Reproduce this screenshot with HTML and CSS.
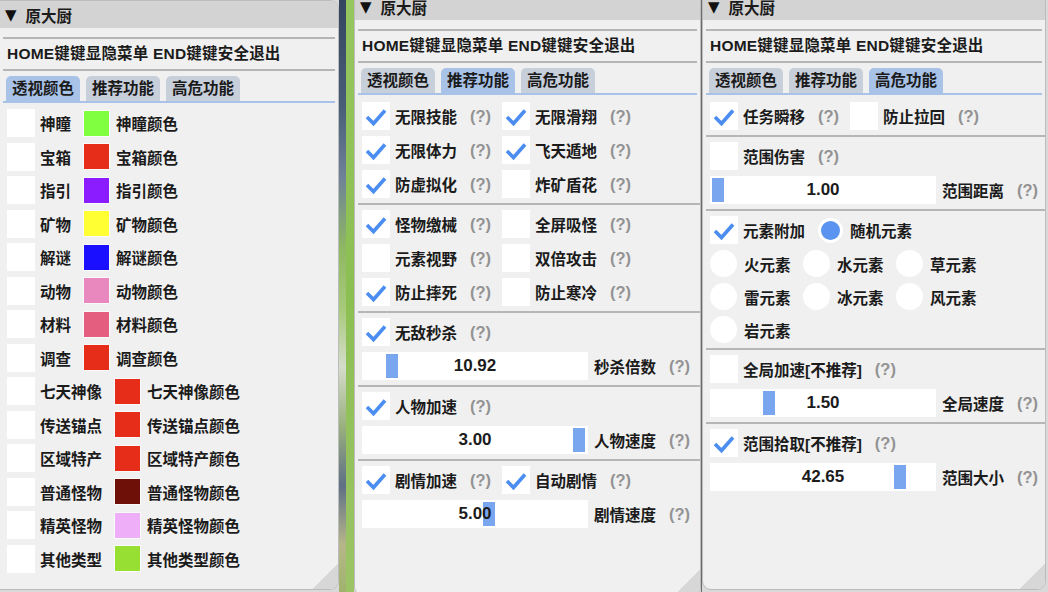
FILE: index.html
```html
<!DOCTYPE html>
<html lang="zh-CN">
<head>
    <meta charset="UTF-8">
    <title>原大厨</title>
    <link rel="stylesheet" href="styles.css">
</head>
<body>
    <!-- 透视颜色 -->
    <div class="win win-a">
        <div class="win-title"><span class="arrow">▼</span>原大厨</div>
        <div class="win-body">
            <div class="sep"></div>
            <div class="hint">HOME键键显隐菜单 END键键安全退出</div>
            <div class="sep"></div>
            <div class="tabs">
                <span class="tab active">透视颜色</span>
                <span class="tab">推荐功能</span>
                <span class="tab">高危功能</span>
            </div>
            <div class="list list-esp">
                <div class="row"><span class="box"></span><span class="lbl">神瞳</span><span class="swatch" style="background:#80ff40"></span><span class="lbl">神瞳颜色</span></div>
                <div class="row"><span class="box"></span><span class="lbl">宝箱</span><span class="swatch" style="background:#e52d1a"></span><span class="lbl">宝箱颜色</span></div>
                <div class="row"><span class="box"></span><span class="lbl">指引</span><span class="swatch" style="background:#8a1cff"></span><span class="lbl">指引颜色</span></div>
                <div class="row"><span class="box"></span><span class="lbl">矿物</span><span class="swatch" style="background:#ffff33"></span><span class="lbl">矿物颜色</span></div>
                <div class="row"><span class="box"></span><span class="lbl">解谜</span><span class="swatch" style="background:#1a0fff"></span><span class="lbl">解谜颜色</span></div>
                <div class="row"><span class="box"></span><span class="lbl">动物</span><span class="swatch" style="background:#e888bf"></span><span class="lbl">动物颜色</span></div>
                <div class="row"><span class="box"></span><span class="lbl">材料</span><span class="swatch" style="background:#e45e80"></span><span class="lbl">材料颜色</span></div>
                <div class="row"><span class="box"></span><span class="lbl">调查</span><span class="swatch" style="background:#e52d1a"></span><span class="lbl">调查颜色</span></div>
                <div class="row"><span class="box"></span><span class="lbl">七天神像</span><span class="swatch" style="background:#e52d1a"></span><span class="lbl">七天神像颜色</span></div>
                <div class="row"><span class="box"></span><span class="lbl">传送锚点</span><span class="swatch" style="background:#e52d1a"></span><span class="lbl">传送锚点颜色</span></div>
                <div class="row"><span class="box"></span><span class="lbl">区域特产</span><span class="swatch" style="background:#e52d1a"></span><span class="lbl">区域特产颜色</span></div>
                <div class="row"><span class="box"></span><span class="lbl">普通怪物</span><span class="swatch" style="background:#6e1008"></span><span class="lbl">普通怪物颜色</span></div>
                <div class="row"><span class="box"></span><span class="lbl">精英怪物</span><span class="swatch" style="background:#efaef8"></span><span class="lbl">精英怪物颜色</span></div>
                <div class="row"><span class="box"></span><span class="lbl">其他类型</span><span class="swatch" style="background:#97df33"></span><span class="lbl">其他类型颜色</span></div>
            </div>
        </div>
        <div class="grip"></div>
    </div>

    <div class="scenery"><div class="rock"></div><div class="grass"></div></div>

    <!-- 推荐功能 -->
    <div class="win win-b">
        <div class="win-title"><span class="arrow">▼</span>原大厨</div>
        <div class="win-body">
            <div class="sep"></div>
            <div class="hint">HOME键键显隐菜单 END键键安全退出</div>
            <div class="sep"></div>
            <div class="tabs">
                <span class="tab">透视颜色</span>
                <span class="tab active">推荐功能</span>
                <span class="tab">高危功能</span>
            </div>
            <div class="list">
                <div class="row">
                    <div class="opt"><span class="box"><svg viewBox="0 0 28 28"><path d="M5 15l6.5 6.5L23 8.5"/></svg></span><span class="lbl">无限技能</span><span class="help">(?)</span></div>
                    <div class="opt"><span class="box"><svg viewBox="0 0 28 28"><path d="M5 15l6.5 6.5L23 8.5"/></svg></span><span class="lbl">无限滑翔</span><span class="help">(?)</span></div>
                </div>
                <div class="row">
                    <div class="opt"><span class="box"><svg viewBox="0 0 28 28"><path d="M5 15l6.5 6.5L23 8.5"/></svg></span><span class="lbl">无限体力</span><span class="help">(?)</span></div>
                    <div class="opt"><span class="box"><svg viewBox="0 0 28 28"><path d="M5 15l6.5 6.5L23 8.5"/></svg></span><span class="lbl">飞天遁地</span><span class="help">(?)</span></div>
                </div>
                <div class="row">
                    <div class="opt"><span class="box"><svg viewBox="0 0 28 28"><path d="M5 15l6.5 6.5L23 8.5"/></svg></span><span class="lbl">防虚拟化</span><span class="help">(?)</span></div>
                    <div class="opt"><span class="box"></span><span class="lbl">炸矿盾花</span><span class="help">(?)</span></div>
                </div>
                <div class="sep"></div>
                <div class="row">
                    <div class="opt"><span class="box"><svg viewBox="0 0 28 28"><path d="M5 15l6.5 6.5L23 8.5"/></svg></span><span class="lbl">怪物缴械</span><span class="help">(?)</span></div>
                    <div class="opt"><span class="box"></span><span class="lbl">全屏吸怪</span><span class="help">(?)</span></div>
                </div>
                <div class="row">
                    <div class="opt"><span class="box"></span><span class="lbl">元素视野</span><span class="help">(?)</span></div>
                    <div class="opt"><span class="box"></span><span class="lbl">双倍攻击</span><span class="help">(?)</span></div>
                </div>
                <div class="row">
                    <div class="opt"><span class="box"><svg viewBox="0 0 28 28"><path d="M5 15l6.5 6.5L23 8.5"/></svg></span><span class="lbl">防止摔死</span><span class="help">(?)</span></div>
                    <div class="opt"><span class="box"></span><span class="lbl">防止寒冷</span><span class="help">(?)</span></div>
                </div>
                <div class="sep"></div>
                <div class="row">
                    <div class="opt"><span class="box"><svg viewBox="0 0 28 28"><path d="M5 15l6.5 6.5L23 8.5"/></svg></span><span class="lbl">无敌秒杀</span><span class="help">(?)</span></div>
                </div>
                <div class="row">
                    <div class="slider"><span class="grab" style="left:24px"></span><span class="val">10.92</span></div>
                    <span class="lbl">秒杀倍数</span><span class="help">(?)</span>
                </div>
                <div class="sep"></div>
                <div class="row">
                    <div class="opt"><span class="box"><svg viewBox="0 0 28 28"><path d="M5 15l6.5 6.5L23 8.5"/></svg></span><span class="lbl">人物加速</span><span class="help">(?)</span></div>
                </div>
                <div class="row">
                    <div class="slider"><span class="grab" style="left:211px"></span><span class="val">3.00</span></div>
                    <span class="lbl">人物速度</span><span class="help">(?)</span>
                </div>
                <div class="sep"></div>
                <div class="row">
                    <div class="opt"><span class="box"><svg viewBox="0 0 28 28"><path d="M5 15l6.5 6.5L23 8.5"/></svg></span><span class="lbl">剧情加速</span><span class="help">(?)</span></div>
                    <div class="opt"><span class="box"><svg viewBox="0 0 28 28"><path d="M5 15l6.5 6.5L23 8.5"/></svg></span><span class="lbl">自动剧情</span><span class="help">(?)</span></div>
                </div>
                <div class="row">
                    <div class="slider"><span class="grab" style="left:121px"></span><span class="val">5.00</span></div>
                    <span class="lbl">剧情速度</span><span class="help">(?)</span>
                </div>
            </div>
        </div>
        <div class="grip"></div>
    </div>

    <div class="seam"></div>

    <!-- 高危功能 -->
    <div class="win win-c">
        <div class="win-title"><span class="arrow">▼</span>原大厨</div>
        <div class="win-body">
            <div class="sep"></div>
            <div class="hint">HOME键键显隐菜单 END键键安全退出</div>
            <div class="sep"></div>
            <div class="tabs">
                <span class="tab">透视颜色</span>
                <span class="tab">推荐功能</span>
                <span class="tab active">高危功能</span>
            </div>
            <div class="list">
                <div class="row">
                    <div class="opt"><span class="box"><svg viewBox="0 0 28 28"><path d="M5 15l6.5 6.5L23 8.5"/></svg></span><span class="lbl">任务瞬移</span><span class="help">(?)</span></div>
                    <div class="opt"><span class="box"></span><span class="lbl">防止拉回</span><span class="help">(?)</span></div>
                </div>
                <div class="sep"></div>
                <div class="row">
                    <div class="opt"><span class="box"></span><span class="lbl">范围伤害</span><span class="help">(?)</span></div>
                </div>
                <div class="row">
                    <div class="slider"><span class="grab" style="left:2px"></span><span class="val">1.00</span></div>
                    <span class="lbl">范围距离</span><span class="help">(?)</span>
                </div>
                <div class="sep"></div>
                <div class="row">
                    <span class="box"><svg viewBox="0 0 28 28"><path d="M5 15l6.5 6.5L23 8.5"/></svg></span><span class="lbl">元素附加</span>
                    <span class="radio on"></span><span class="lbl">随机元素</span>
                </div>
                <div class="row radios">
                    <div class="pick"><span class="radio"></span><span class="lbl">火元素</span></div>
                    <div class="pick"><span class="radio"></span><span class="lbl">水元素</span></div>
                    <div class="pick"><span class="radio"></span><span class="lbl">草元素</span></div>
                </div>
                <div class="row radios">
                    <div class="pick"><span class="radio"></span><span class="lbl">雷元素</span></div>
                    <div class="pick"><span class="radio"></span><span class="lbl">冰元素</span></div>
                    <div class="pick"><span class="radio"></span><span class="lbl">风元素</span></div>
                </div>
                <div class="row radios">
                    <div class="pick"><span class="radio"></span><span class="lbl">岩元素</span></div>
                </div>
                <div class="sep"></div>
                <div class="row">
                    <div class="opt"><span class="box"></span><span class="lbl">全局加速[不推荐]</span><span class="help">(?)</span></div>
                </div>
                <div class="row">
                    <div class="slider"><span class="grab" style="left:53px"></span><span class="val">1.50</span></div>
                    <span class="lbl">全局速度</span><span class="help">(?)</span>
                </div>
                <div class="sep"></div>
                <div class="row">
                    <div class="opt"><span class="box"><svg viewBox="0 0 28 28"><path d="M5 15l6.5 6.5L23 8.5"/></svg></span><span class="lbl">范围拾取[不推荐]</span><span class="help">(?)</span></div>
                </div>
                <div class="row">
                    <div class="slider"><span class="grab" style="left:184px"></span><span class="val">42.65</span></div>
                    <span class="lbl">范围大小</span><span class="help">(?)</span>
                </div>
            </div>
        </div>
        <div class="grip"></div>
    </div>
</body>
</html>
```

FILE: styles.css
```css
* {
    box-sizing: border-box;
}
body {
    margin: 0;
    width: 1048px;
    height: 592px;
    overflow: hidden;
    display: flex;
    align-items: flex-start;
    background-color: #d9d9d9;
    font-family: "Liberation Sans", "Noto Sans CJK SC", sans-serif;
    font-weight: bold;
    font-size: 15.5px;
    color: #1b1b1b;
}

/* window frame */
.win {
    position: relative;
    flex: none;
    background-color: #f0f0f0;
    border: 1px solid #bcbcbc;
    border-radius: 9px;
    overflow: hidden;
}
.win-a {
    width: 339px;
    height: 590px;
    border-left: none;
    border-radius: 0 9px 9px 0;
}
.win-b {
    width: 347px;
    height: 604px;
    margin-top: -8px;
}
.win-c {
    width: 344px;
    height: 598px;
    margin-top: -8px;
}
.win-title {
    height: 27px;
    display: flex;
    align-items: center;
    padding-left: 5px;
    background-color: #d3d3d3;
}
.arrow {
    font-family: "DejaVu Sans", sans-serif;
    font-size: 15px;
    margin-right: 9px;
    color: #111;
}
.win-body {
    padding: 0 3px;
}
.grip {
    position: absolute;
    right: 0;
    bottom: 0;
    width: 26px;
    height: 26px;
    background: linear-gradient(135deg, transparent 50%, #d7d7d7 50%);
}

/* between the windows */
.scenery {
    flex: none;
    width: 15px;
    height: 592px;
    display: flex;
}
.rock {
    width: 7px;
    background: linear-gradient(180deg, #34465f 0%, #4a5d78 18%, #6f8298 30%, #8fb862 42%, #a7c97a 52%, #d5dccb 62%, #9ab07e 72%, #5f6f86 82%, #b7b68a 92%, #9fb36c 100%);
}
.grass {
    width: 8px;
    background: linear-gradient(180deg, #96c65e, #8cbf52 50%, #9cc466);
}
.seam {
    flex: none;
    width: 1px;
    height: 592px;
    background-color: #6b6b6b;
}

.sep {
    height: 2px;
    margin-top: 9px;
    background-color: #b6b6b6;
}
.hint {
    line-height: 30px;
    padding-left: 4px;
    letter-spacing: 0.2px;
    white-space: nowrap;
}
.hint + .sep {
    margin-top: 0;
}

/* tabs */
.tabs {
    display: flex;
    gap: 6px;
    margin-top: 5px;
    padding-left: 3px;
    border-bottom: 2px solid #a8c2e8;
}
.tab {
    height: 25px;
    line-height: 25px;
    padding: 0 6px;
    border-radius: 5px 5px 0 0;
    background-color: #c7cfda;
}
.tab.active {
    background-color: #a8c2e8;
}

/* widget list */
.list {
    display: flex;
    flex-direction: column;
    gap: 6px;
    margin-top: 7px;
    padding-left: 4px;
}
.list .sep {
    margin: -1px -4px;
}
.list-esp {
    gap: 5.5px;
    margin-top: 6px;
}
.row {
    display: flex;
    align-items: center;
    height: 28px;
}
.row.radios {
    height: 27px;
}
.opt {
    display: flex;
    align-items: center;
    width: 140px;
    flex: none;
}
.box {
    flex: none;
    width: 28px;
    height: 28px;
    background-color: #fff;
}
.box svg {
    display: block;
    width: 28px;
    height: 28px;
    fill: none;
    stroke: #4b8df0;
    stroke-width: 3.6;
}
.lbl {
    margin-left: 5px;
    white-space: nowrap;
}
.help {
    margin-left: 13px;
    font-size: 16.5px;
    color: #939393;
}
.swatch {
    flex: none;
    width: 27px;
    height: 27px;
    margin-left: 12px;
    border: 1px solid #fafafa;
}
.swatch + .lbl {
    margin-left: 6px;
}

/* slider */
.slider {
    position: relative;
    flex: none;
    width: 226px;
    height: 28px;
    display: flex;
    align-items: center;
    justify-content: center;
    background-color: #fff;
}
.slider + .lbl {
    margin-left: 6px;
}
.grab {
    position: absolute;
    top: 2px;
    width: 12px;
    height: 24px;
    background-color: #79a6ef;
}
.val {
    position: relative;
    font-size: 17px;
}

/* radio buttons */
.radio {
    flex: none;
    width: 27px;
    height: 27px;
    border-radius: 50%;
    background-color: #fff;
}
.radio.on {
    width: 25px;
    height: 25px;
    margin-left: 13px;
    border: 3px solid #fff;
    background-color: #5a93f0;
}
.radio + .lbl {
    margin-left: 7px;
}
.pick {
    display: flex;
    align-items: center;
    width: 93px;
    flex: none;
}
```
